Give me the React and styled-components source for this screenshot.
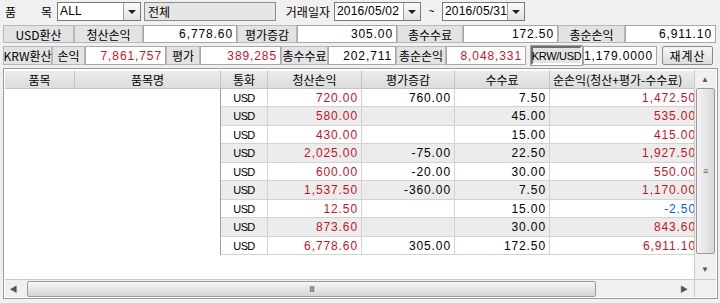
import React from 'react';
import styled, { createGlobalStyle } from 'styled-components';

const GlobalStyle = createGlobalStyle`
  body {
    margin: 0;
    background: #f0f0f0;
    font-family: "Liberation Sans", "Noto Sans CJK KR", sans-serif;
    font-size: 12px;
    color: #000;
  }
`;

const Page = styled.div`
  width: 720px;
  height: 303px;
  box-sizing: border-box;
  padding: 2px 2px 0 3px;
  display: flex;
  flex-direction: column;
  overflow: hidden;
`;

const FilterRow = styled.div`
  display: flex;
  align-items: center;
  height: 19px;
`;

const FieldLabel = styled.div`
  width: ${(p) => p.$w}px;
  margin: ${(p) => p.$m || '0'};
  display: flex;
  justify-content: ${(p) => (p.$spread ? 'space-between' : 'flex-end')};
  font-family: "Noto Sans CJK KR", sans-serif;
  line-height: 1;
`;

const Combo = styled.div`
  width: ${(p) => p.$w}px;
  height: 19px;
  box-sizing: border-box;
  border: 1px solid #7a7a7a;
  background: #fff;
  display: flex;
  margin-left: ${(p) => p.$ml || 0}px;
`;

const ComboText = styled.div`
  flex: 1;
  padding-left: 2px;
  line-height: 17px;
  letter-spacing: 0.2px;
`;

const DropBtn = styled.div`
  width: 16px;
  border-left: 1px solid #a0a0a0;
  background: linear-gradient(#fafafa, #e2e2e2);
  display: flex;
  align-items: center;
  justify-content: center;
  &::after {
    content: '';
    border-left: 4px solid transparent;
    border-right: 4px solid transparent;
    border-top: 4px solid #222;
  }
`;

const ReadBox = styled.div`
  width: 132px;
  height: 19px;
  box-sizing: border-box;
  margin-left: 3px;
  border: 1px solid #8c8c8c;
  background: #e6e6e6;
  padding-left: 3px;
  line-height: 17px;
  font-family: "Noto Sans CJK KR", sans-serif;
`;

const Tilde = styled.div`
  width: 21px;
  text-align: center;
  font-size: 10px;
`;

const SummaryRow = styled.div`
  display: flex;
  align-items: stretch;
  height: ${(p) => p.$h}px;
  margin-top: ${(p) => p.$mt}px;
`;

const Cell = styled.div`
  width: ${(p) => p.$w}px;
  box-sizing: border-box;
  border: 1px solid ${(p) => (p.$value ? '#a8a8a8' : '#b8b8b8')};
  background: ${(p) => (p.$value ? '#fff' : '#e3e3e3')};
  color: ${(p) => (p.$red ? '#c8142c' : '#000')};
  display: flex;
  align-items: center;
  justify-content: ${(p) => (p.$value ? 'flex-end' : 'center')};
  padding: 0 3px;
  font-family: ${(p) =>
    p.$value ? '"Liberation Sans", sans-serif' : '"Noto Sans CJK KR", sans-serif'};
  letter-spacing: ${(p) => (p.$value ? '0.9px' : '0')};
  white-space: nowrap;
`;

const RateTag = styled.div`
  width: 51px;
  margin-left: 5px;
  margin-right: 1px;
  box-sizing: border-box;
  border: 2px solid;
  border-color: #6e6e6e #fff #fff #6e6e6e;
  outline: 1px solid #a0a0a0;
  background: #e3e3e3;
  display: flex;
  align-items: center;
  justify-content: center;
  font-size: 11px;
  letter-spacing: -0.3px;
`;

const RecalcButton = styled.button`
  width: 51px;
  margin-left: 5px;
  padding: 0;
  border: 1px solid #8a8a8a;
  border-radius: 2px;
  background: linear-gradient(#f6f6f6, #dcdcdc);
  font-family: "Noto Sans CJK KR", sans-serif;
  font-size: 12px;
  letter-spacing: 1px;
`;

const GridFrame = styled.div`
  margin-top: 3px;
  width: 715px;
  height: 231px;
  box-sizing: border-box;
  border: 1px solid #9b9b9b;
  padding: 1px;
  background: #fff;
  display: flex;
  flex-direction: column;
`;

const GridBody = styled.div`
  display: flex;
  height: 209px;
`;

const Viewport = styled.div`
  width: 690px;
  overflow: hidden;
  background: #fff;
`;

const Table = styled.div`
  width: 760px;
`;

const HeadRow = styled.div`
  display: grid;
  grid-template-columns: 70px 146px 47px 94px 93px 95px 150px;
  height: 18px;
  background: linear-gradient(#ececec, #dcdcdc);
  border-bottom: 1px solid #c4c4c4;
`;

const HeadCell = styled.div`
  border-right: 1px solid #c4c4c4;
  border-top: 1px solid #fff;
  display: flex;
  align-items: center;
  justify-content: ${(p) => (p.$left ? 'flex-start' : 'center')};
  padding-left: ${(p) => (p.$left ? 3 : 0)}px;
  font-family: "Noto Sans CJK KR", sans-serif;
  white-space: nowrap;
`;

const DataRow = styled.div`
  display: grid;
  grid-template-columns: 216px 47px 94px 93px 95px 150px;
  height: ${(p) => p.$h}px;
`;

const Blank = styled.div`
  background: #fff;
  border-right: 1px solid #a0a0a0;
`;

const DataCell = styled.div`
  background: ${(p) => (p.$alt ? '#ececec' : '#fff')};
  border-right: 1px solid #d2d2d2;
  border-bottom: 1px solid #d2d2d2;
  display: flex;
  align-items: center;
  justify-content: ${(p) => (p.$center ? 'center' : 'flex-end')};
  padding-right: ${(p) => (p.$center ? 0 : 3)}px;
  color: ${(p) => (p.$tone === 'red' ? '#c0142a' : p.$tone === 'blue' ? '#1060d8' : '#000')};
  letter-spacing: ${(p) => (p.$center ? '-0.6px' : '0.9px')};
  font-size: ${(p) => (p.$center ? 11 : 12)}px;
  white-space: nowrap;
`;

const VScroll = styled.div`
  width: 21px;
  background: #f0f0f0;
  border-left: 1px solid #c8c8c8;
  display: flex;
  flex-direction: column;
`;

const Arrow = styled.div`
  width: ${(p) => p.$w || 20}px;
  height: ${(p) => p.$h || 18}px;
  display: flex;
  align-items: center;
  justify-content: center;
  color: #555;
  font-size: 8px;
`;

const VThumb = styled.div`
  height: 166px;
  margin: 0 1px;
  box-sizing: border-box;
  border: 1px solid #9a9a9a;
  border-radius: 2px;
  background: linear-gradient(90deg, #f4f4f4, #d8d8d8);
  display: flex;
  align-items: center;
  justify-content: center;
  font-size: 9px;
  color: #666;
`;

const Track = styled.div`
  flex: 1;
`;

const HScrollRow = styled.div`
  display: flex;
  height: 18px;
  margin-top: auto;
`;

const HScroll = styled.div`
  width: 690px;
  display: flex;
  align-items: center;
  background: #f0f0f0;
  border-top: 1px solid #c8c8c8;
`;

const HThumb = styled.div`
  width: 569px;
  height: 16px;
  margin-left: 5px;
  box-sizing: border-box;
  border: 1px solid #9a9a9a;
  border-radius: 2px;
  background: linear-gradient(#f6f6f6, #d6d6d6);
  display: flex;
  align-items: center;
  justify-content: center;
  font-size: 9px;
  letter-spacing: -1px;
  color: #555;
`;

const Corner = styled.div`
  width: 21px;
  background: #f0f0f0;
  border-left: 1px solid #c8c8c8;
  border-top: 1px solid #c8c8c8;
`;

const rows = [
  ['720.00', '760.00', '7.50', '1,472.50', 'red'],
  ['580.00', '', '45.00', '535.00', 'red'],
  ['430.00', '', '15.00', '415.00', 'red'],
  ['2,025.00', '-75.00', '22.50', '1,927.50', 'red'],
  ['600.00', '-20.00', '30.00', '550.00', 'red'],
  ['1,537.50', '-360.00', '7.50', '1,170.00', 'red'],
  ['12.50', '', '15.00', '-2.50', 'blue'],
  ['873.60', '', '30.00', '843.60', 'red'],
  ['6,778.60', '305.00', '172.50', '6,911.10', 'red'],
];

const rowHeights = [18, 19, 18, 19, 18, 19, 18, 19, 18];

const App = () => {
  return (
    <React.Fragment>
      <GlobalStyle />
      <Page>
        <FilterRow>
          <FieldLabel $w={47} $m="0 0 0 2px" $spread>
            <span>품</span>
            <span>목</span>
          </FieldLabel>
          <Combo $w={84} $ml={5}>
            <ComboText>ALL</ComboText>
            <DropBtn />
          </Combo>
          <ReadBox>전체</ReadBox>
          <FieldLabel $w={54}>거래일자</FieldLabel>
          <Combo $w={87} $ml={4}>
            <ComboText>2016/05/02</ComboText>
            <DropBtn />
          </Combo>
          <Tilde>~</Tilde>
          <Combo $w={83}>
            <ComboText>2016/05/31</ComboText>
            <DropBtn />
          </Combo>
        </FilterRow>

        <SummaryRow $h={18} $mt={4}>
          <Cell $w={71}>USD환산</Cell>
          <Cell $w={69}>청산손익</Cell>
          <Cell $w={94} $value>6,778.60</Cell>
          <Cell $w={60}>평가증감</Cell>
          <Cell $w={100} $value>305.00</Cell>
          <Cell $w={66}>총수수료</Cell>
          <Cell $w={95} $value>172.50</Cell>
          <Cell $w={67}>총순손익</Cell>
          <Cell $w={91} $value>6,911.10</Cell>
        </SummaryRow>

        <SummaryRow $h={19} $mt={3}>
          <Cell $w={49}>KRW환산</Cell>
          <Cell $w={33}>손익</Cell>
          <Cell $w={81} $value $red>7,861,757</Cell>
          <Cell $w={34}>평가</Cell>
          <Cell $w={81} $value $red>389,285</Cell>
          <Cell $w={47}>총수수료</Cell>
          <Cell $w={68} $value>202,711</Cell>
          <Cell $w={50}>총순손익</Cell>
          <Cell $w={80} $value $red>8,048,331</Cell>
          <RateTag>KRW/USD</RateTag>
          <Cell $w={74} $value>1,179.0000</Cell>
          <RecalcButton>재계산</RecalcButton>
        </SummaryRow>

        <GridFrame>
          <GridBody>
            <Viewport>
              <Table>
                <HeadRow>
                  <HeadCell>품목</HeadCell>
                  <HeadCell>품목명</HeadCell>
                  <HeadCell>통화</HeadCell>
                  <HeadCell>청산손익</HeadCell>
                  <HeadCell>평가증감</HeadCell>
                  <HeadCell>수수료</HeadCell>
                  <HeadCell $left>순손익(청산+평가-수수료)</HeadCell>
                </HeadRow>
                {rows.map((r, i) => {
                  const alt = i % 2 === 1;
                  return (
                    <DataRow key={i} $h={rowHeights[i]}>
                      <Blank />
                      <DataCell $alt={alt} $center>USD</DataCell>
                      <DataCell $alt={alt} $tone="red">{r[0]}</DataCell>
                      <DataCell $alt={alt}>{r[1]}</DataCell>
                      <DataCell $alt={alt}>{r[2]}</DataCell>
                      <DataCell $alt={alt} $tone={r[4]}>{r[3]}</DataCell>
                    </DataRow>
                  );
                })}
              </Table>
            </Viewport>
            <VScroll>
              <Arrow $h={18}>▲</Arrow>
              <VThumb>≡</VThumb>
              <Track />
              <Arrow $h={20}>▼</Arrow>
            </VScroll>
          </GridBody>
          <HScrollRow>
            <HScroll>
              <Arrow $w={17}>◀</Arrow>
              <HThumb>III</HThumb>
              <Track />
              <Arrow $w={20}>▶</Arrow>
            </HScroll>
            <Corner />
          </HScrollRow>
        </GridFrame>
      </Page>
    </React.Fragment>
  );
};

export default App;
